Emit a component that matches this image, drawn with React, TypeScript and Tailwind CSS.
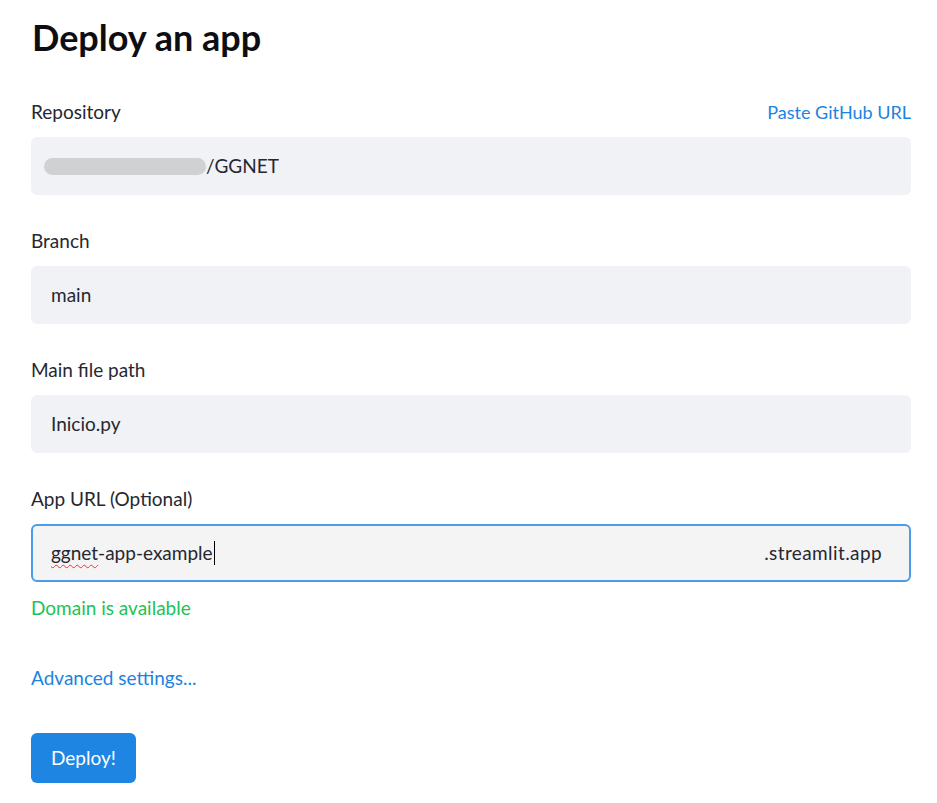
export default function App() {
  const font = { fontFamily: "Lato, 'Noto Sans', sans-serif" };
  return (
    <div className="min-h-screen bg-white text-[#262730]" style={font}>
      <div className="w-[880px] ml-[31px] pt-[14px]">
        <h1 className="text-[36px] font-bold leading-[46px] text-[#0e0e12] ml-[1px]">Deploy an app</h1>

        <div className="mt-[40px]">
          <div className="flex justify-between items-center h-[24px]">
            <span className="text-[19px]">Repository</span>
            <span className="text-[18px] text-[#1c83e1]">Paste GitHub URL</span>
          </div>
          <div className="mt-[13px] h-[58px] rounded-[6px] bg-[#f0f2f6] flex items-center pl-[13px] text-[19px]">
            <span className="inline-block w-[162px] h-[17px] rounded-full bg-[#d0d1d3]" />
            <span>/GGNET</span>
          </div>
        </div>

        <Field label="Branch" value="main" />
        <Field label="Main file path" value="Inicio.py" />

        <div className="mt-[34px]">
          <div className="h-[24px] flex items-center text-[19px]">App URL (Optional)</div>
          <div className="mt-[13px] h-[58px] rounded-[6px] bg-[#f4f4f5] border-2 border-[#4a9be8] flex items-center justify-between pl-[18px] pr-[27px] text-[19px]">
            <span className="flex items-center">
              <span className="underline decoration-wavy decoration-[#e53935] decoration-1 underline-offset-[4px]">ggnet</span>
              <span>-app-example</span>
              <span className="inline-block w-[1px] h-[24px] bg-black ml-[1px]" />
            </span>
            <span className="tracking-[0.4px]">.streamlit.app</span>
          </div>
          <div className="mt-[14px] text-[19px] text-[#21c354] leading-[24px]">Domain is available</div>
        </div>

        <div className="mt-[46px] text-[19px] text-[#1c83e1] leading-[24px]">Advanced settings...</div>

        <button className="mt-[43px] h-[50px] px-[20px] rounded-[6px] bg-[#1e86e2] text-white text-[19px]">Deploy!</button>
      </div>
    </div>
  );
}

function Field({ label, value }: { label: string; value: string }) {
  return (
    <div className="mt-[34px]">
      <div className="h-[24px] flex items-center text-[19px]">{label}</div>
      <div className="mt-[13px] h-[58px] rounded-[6px] bg-[#f0f2f6] flex items-center pl-[20px] text-[19px]">{value}</div>
    </div>
  );
}
